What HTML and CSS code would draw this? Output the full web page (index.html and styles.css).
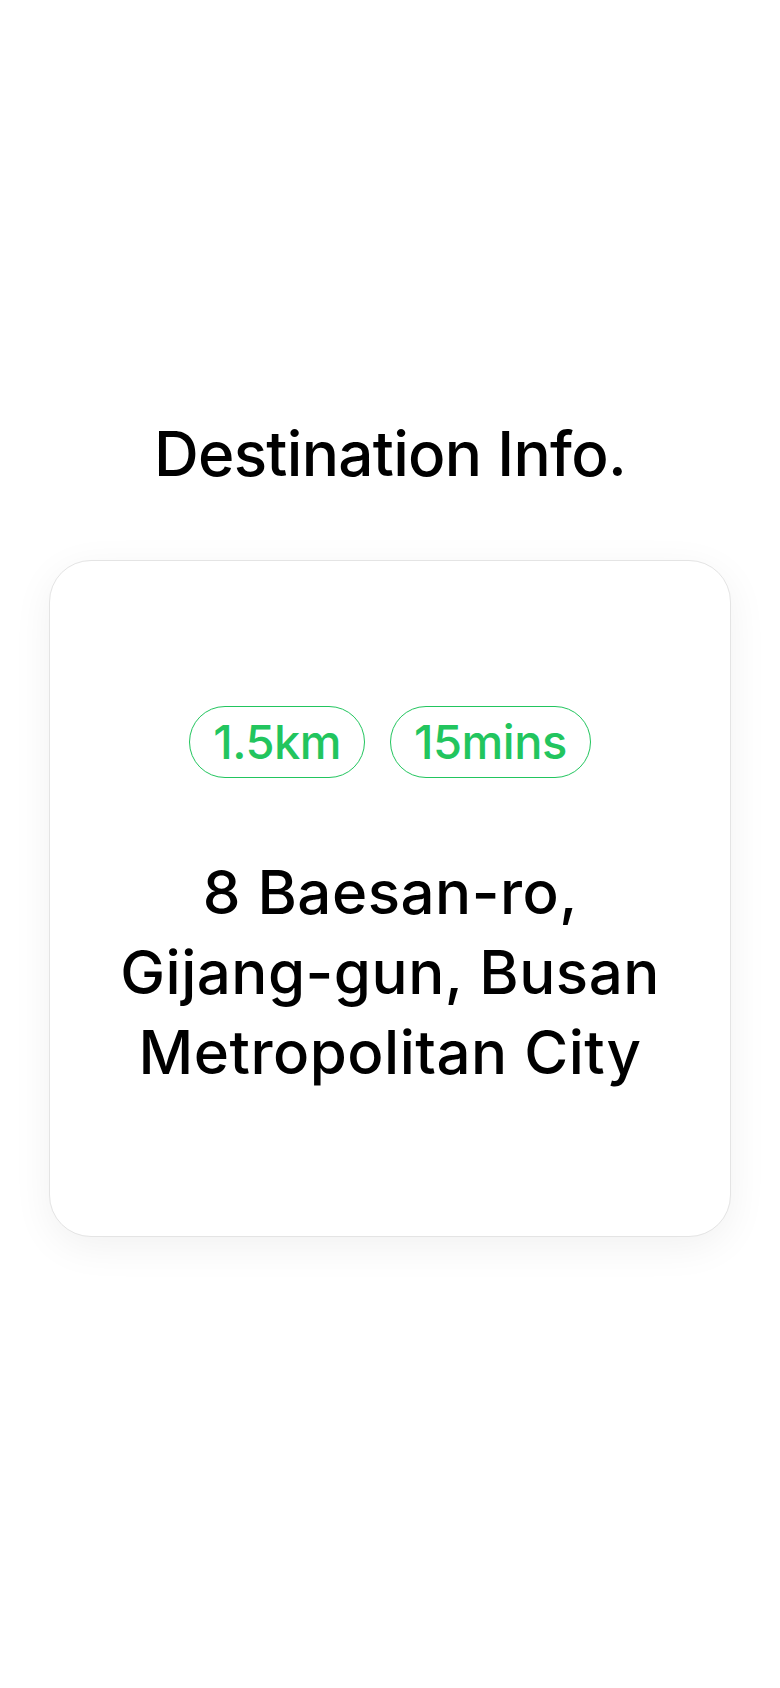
FILE: index.html
```html
<!DOCTYPE html>
<html lang="en">
<head>
<meta charset="utf-8">
<title>Destination Info.</title>
<link rel="stylesheet" href="styles.css">
</head>
<body>
<main class="page">
  <h1 class="title">Destination Info.</h1>
  <section class="card">
    <div class="chips">
      <span class="chip">1.5km</span>
      <span class="chip">15mins</span>
    </div>
    <p class="address"><span class="nowrap">8 Baesan-ro,</span> <span class="nowrap">Gijang-gun,</span> <span class="nowrap">Busan</span> <span class="nowrap">Metropolitan City</span></p>
  </section>
</main>
</body>
</html>
```

FILE: styles.css
```css
html, body {
  margin: 0;
  padding: 0;
  background: #ffffff;
}

body {
  font-family: Inter, "Noto Sans", "Liberation Sans", sans-serif;
  color: #000000;
}

.page {
  box-sizing: border-box;
  width: 780px;
  min-height: 1688px;
  padding: 416px 49px 0;
  display: flex;
  flex-direction: column;
  align-items: stretch;
}

.title {
  margin: 0;
  font-size: 62px;
  line-height: 75px;
  font-weight: 500;
  text-align: center;
  letter-spacing: -0.7px;
}

.card {
  box-sizing: border-box;
  margin-top: 69px;
  height: 677px;
  padding: 0 30px;
  border: 1.5px solid #e4e4e4;
  border-radius: 42px;
  background: #ffffff;
  box-shadow: 0 10px 40px rgba(0, 0, 0, 0.06);
  display: flex;
  flex-direction: column;
  align-items: center;
  justify-content: center;
}

.chips {
  display: flex;
  gap: 25px;
  justify-content: center;
}

.chip {
  display: inline-block;
  padding: 6.5px 23px;
  line-height: 57px;
  font-size: 47px;
  font-weight: 500;
  color: #22c55e;
  border: 1.5px solid #22c55e;
  border-radius: 40px;
  letter-spacing: -0.5px;
}

.address {
  margin: 74px 0 0;
  font-size: 60px;
  line-height: 80px;
  font-weight: 500;
  text-align: center;
  letter-spacing: 0.5px;
}

.nowrap {
  white-space: nowrap;
}
```
